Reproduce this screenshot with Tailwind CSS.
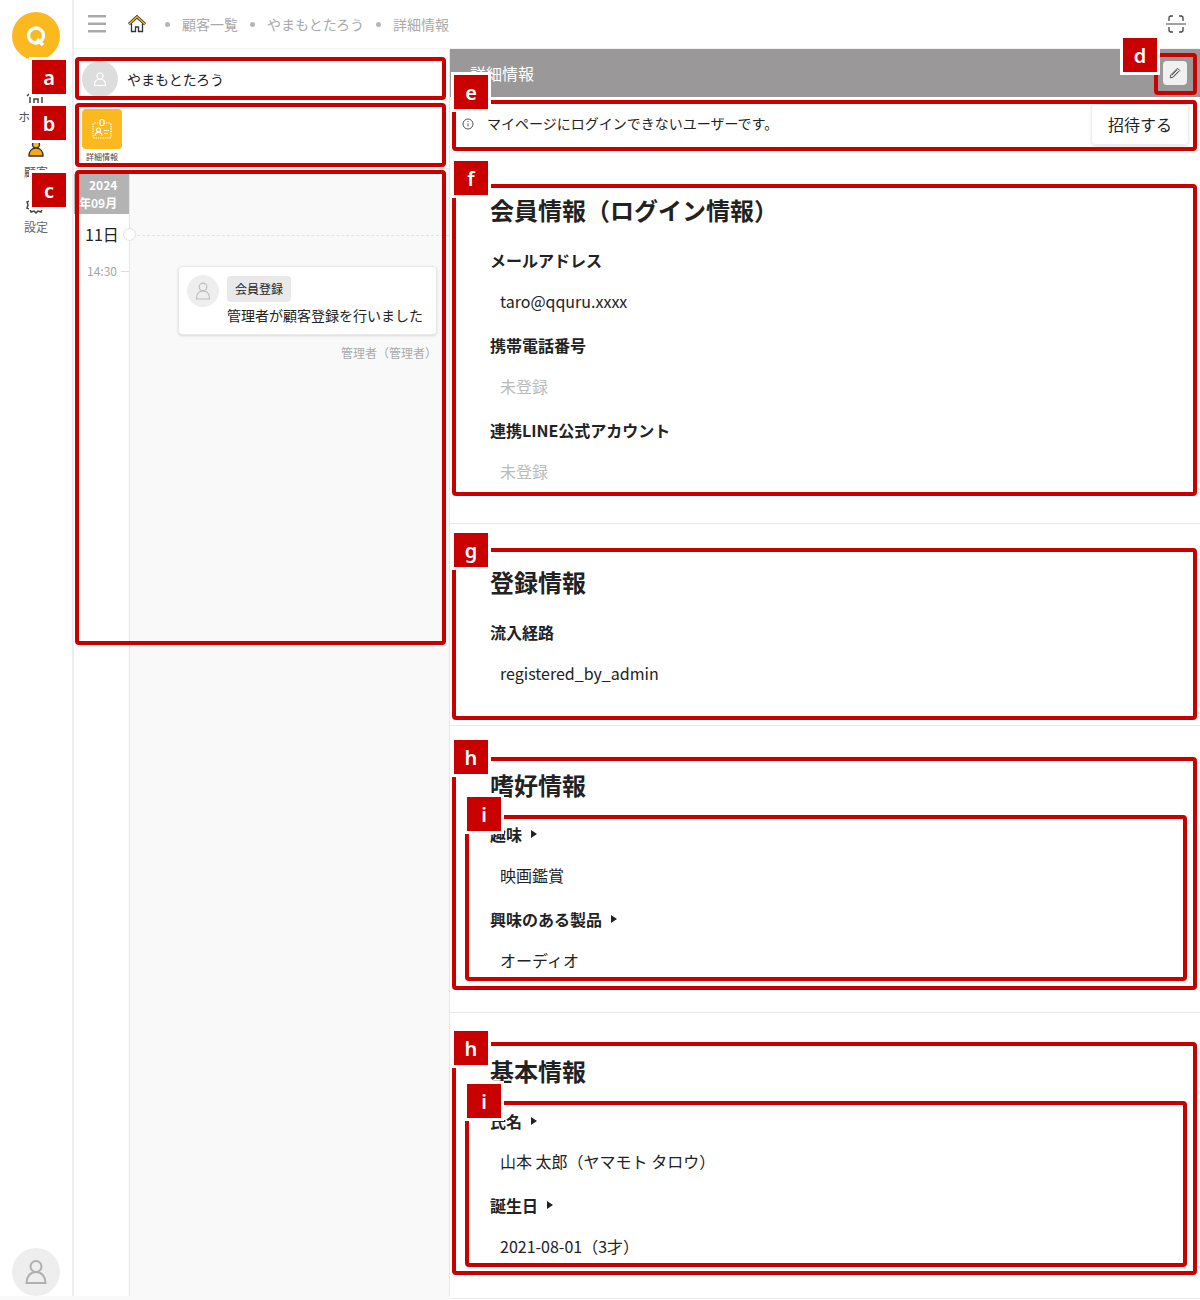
<!DOCTYPE html>
<html lang="ja">
<head>
    <meta charset="UTF-8">
    <meta name="viewport" content="width=device-width, initial-scale=1.0">
    <title>詳細情報</title>
    <script src="https://cdn.jsdelivr.net/npm/@tailwindcss/browser@4"></script>
</head>
<body class="bg-white font-['Noto_Sans_CJK_JP','Noto_Sans',sans-serif] text-[#222]">
<div class="relative w-[1200px] h-[1300px] overflow-hidden">
    <div class="flex h-[1296px]">
        <!-- sidebar -->
        <aside class="w-[74px] shrink-0 border-r-2 border-[#eeeeee] flex flex-col items-center pt-3">
            <div class="w-12 h-12 rounded-full bg-[#fbb91f] flex items-center justify-center">
                <svg class="w-6 h-6" viewBox="0 0 24 24" fill="none" stroke="white" stroke-width="3.400"><circle cx="12" cy="11.500" r="7.500"/><path d="M13 15l6 6"/></svg>
            </div>
            <div class="mt-6 flex flex-col items-center">
                <svg class="w-6 h-6" viewBox="0 0 24 24" fill="none" stroke="#444" stroke-width="1.500"><path d="M3 12l9-8 9 8"/><path d="M6 10v9q0 1 1 1h3v-5h4v5h3q1 0 1-1v-9"/></svg>
                <span class="text-xs leading-4 mt-[1px] text-[#555]">ホーム</span>
            </div>
            <div class="mt-[11px] flex flex-col items-center">
                <svg class="w-6 h-6" viewBox="0 0 24 24" fill="#f5a81c" stroke="#333" stroke-width="1.400"><circle cx="12" cy="8.500" r="3.500" fill="#fbb91f"/><path d="M5 20c0-5 3-8 7-8s7 3 7 8z"/></svg>
                <span class="text-xs leading-4 mt-[4px] text-[#555]">顧客</span>
            </div>
            <div class="mt-[13px] flex flex-col items-center">
                <svg class="w-6 h-6" viewBox="0 0 24 24" fill="none" stroke="#444" stroke-width="1.500"><circle cx="12" cy="12" r="3"/><path d="M12 3l2 3 3-1 1 3 3 1-1 3 1 3-3 1-1 3-3-1-2 2-2-2-3 1-1-3-3-1 1-3-1-3 3-1 1-3 3 1z"/></svg>
                <span class="text-xs leading-4 mt-[2px] text-[#666]">設定</span>
            </div>
            <div class="mt-auto w-12 h-12 rounded-full bg-[#eeeeee] flex items-center justify-center">
                <svg class="w-7 h-7" viewBox="0 0 28 28" fill="none" stroke="#b0b0b0" stroke-width="2"><circle cx="14" cy="8.500" r="5.500"/><path d="M4.500 25c0-6 3.500-11 9.500-11s9.500 5 9.500 11z"/></svg>
            </div>
        </aside>

        <div class="flex-1 flex flex-col min-w-0">
            <!-- top bar -->
            <header class="h-[49px] shrink-0 flex items-center pl-[14px] pr-[14px] text-sm text-[#aaaaaa] border-b border-[#f2f2f2]">
                <svg class="w-[18px] h-[18px]" viewBox="0 0 18 18" fill="#aaaaaa"><rect y="0" width="18" height="2.500"/><rect y="7.500" width="18" height="2.500"/><rect y="15" width="18" height="2.500"/></svg>
                <svg class="w-[18px] h-[18px] ml-[22px]" viewBox="0 0 18 18"><path d="M3.500 8.500V16.500h4V12h3v4.500h4V8.500" fill="white" stroke="#333" stroke-width="1.300"/><path d="M.8 9.200L9 1.800l8.200 7.400" fill="none" stroke="#333" stroke-width="3"/><path d="M.8 9.200L9 1.800l8.200 7.400" fill="none" stroke="#f5b01e" stroke-width="1.500"/></svg>
                <span class="w-[5px] h-[5px] rounded-full bg-[#b5b5b5] ml-[19px]"></span>
                <span class="ml-[12px]">顧客一覧</span>
                <span class="w-[5px] h-[5px] rounded-full bg-[#b5b5b5] ml-[12px]"></span>
                <span class="ml-[12px]">やまもとたろう</span>
                <span class="w-[5px] h-[5px] rounded-full bg-[#b5b5b5] ml-[12px]"></span>
                <span class="ml-[12px]">詳細情報</span>
                <svg class="w-[20px] h-[18px] ml-auto" viewBox="0 0 20 18" fill="none" stroke="#444" stroke-width="1.300"><path d="M3 6V3q0-2 2-2h2M13 1h2q2 0 2 2v3M3 12v3q0 2 2 2h2M13 17h2q2 0 2-2v-3"/><path d="M0 9h20" stroke-width="1"/></svg>
            </header>

            <div class="flex-1 flex min-h-0">
                <!-- left panel -->
                <div class="w-[376px] shrink-0 border-r border-[#e8e8e8] flex flex-col">
                    <div class="h-[51px] flex items-center pl-2 pt-[9px]">
                        <div class="w-9 h-9 rounded-full bg-[#dddddd] flex items-center justify-center">
                            <svg class="w-4 h-4" viewBox="0 0 16 16" fill="none" stroke="white" stroke-width="1.200"><circle cx="8" cy="5" r="3"/><path d="M2.500 14.500c0-4 2-6.500 5.500-6.500s5.500 2.500 5.500 6.500z"/></svg>
                        </div>
                        <span class="ml-[9px] text-sm">やまもとたろう</span>
                    </div>
                    <div class="h-[69px] pl-2 pt-[9px] border-b border-[#e8e8e8]">
                        <div class="w-10 flex flex-col items-center">
                            <div class="w-10 h-10 rounded bg-[#fbb91f] flex items-center justify-center">
                                <svg class="w-6 h-6" viewBox="0 0 24 24" fill="none" stroke="white" stroke-width="1.200"><rect x="3" y="6" width="18" height="15" rx="1.500" stroke-dasharray="1.500 0.800"/><rect x="10" y="2.500" width="4" height="6" rx="1.500" fill="#fbb91f"/><circle cx="8.500" cy="13" r="2"/><path d="M5 19c0-3 1.500-3.500 3.500-3.500S12 16 12 19M14 13.500h5M14 16.500h4"/></svg>
                            </div>
                            <span class="text-[8px] leading-3 mt-[2px] whitespace-nowrap text-[#444]">詳細情報</span>
                        </div>
                    </div>
                    <!-- timeline -->
                    <div class="flex-1 flex min-h-0">
                        <div class="w-[56px] shrink-0 border-r border-[#e6e6e6] flex flex-col">
                            <div class="mt-[5px] h-[40px] bg-[#b3b3b3] text-white text-xs leading-[18px] font-bold pt-[2px] whitespace-nowrap">
                                <span class="block pl-[15px]">2024</span>
                                <span class="block pl-[5px]">年09月</span>
                            </div>
                            <div class="relative h-[40px] flex items-center pl-[11px] text-base">11日
                                <span class="absolute right-[-7px] top-[14px] w-[13px] h-[13px] rounded-full bg-white border border-[#e2e2e2]"></span>
                            </div>
                            <div class="flex items-center pl-[13px] mt-[8px] text-xs leading-[18px] text-[#a5a5a5]">14:30<span class="ml-[4px] w-[8px] border-t border-[#dddddd]"></span></div>
                        </div>
                        <div class="flex-1 bg-[#f9f9f9] flex flex-col">
                            <div class="mt-[66px] ml-[7px] border-t border-dashed border-[#e2e2e2]"></div>
                            <div class="ml-[48px] mr-[12px] mt-[30px] h-[69px] bg-white border border-[#e8e8e8] rounded shadow-sm flex pl-2 pt-2">
                                <div class="w-8 h-8 rounded-full bg-[#eeeeee] flex items-center justify-center shrink-0">
                                    <svg class="w-5 h-5" viewBox="0 0 20 20" fill="none" stroke="#bbbbbb" stroke-width="1.200"><circle cx="10" cy="6" r="3.800"/><path d="M3.500 18c0-5 2.500-8 6.500-8s6.500 3 6.500 8z"/></svg>
                                </div>
                                <div class="ml-2">
                                    <span class="mt-[1px] block w-[64px] h-[26px] bg-[#e9e9e9] rounded text-xs leading-[26px] text-center">会員登録</span>
                                    <p class="text-sm leading-5 mt-[3px] whitespace-nowrap">管理者が顧客登録を行いました</p>
                                </div>
                            </div>
                            <p class="mt-[9px] pr-[12px] text-right text-xs leading-[18px] text-[#aaaaaa]">管理者（管理者）</p>
                        </div>
                    </div>
                </div>

                <!-- right panel -->
                <main class="flex-1 min-w-0">
                    <div class="h-[48px] bg-[#9a9898] flex items-center pl-5 pr-[13px] text-white">
                        <span class="text-base">詳細情報</span>
                        <button class="ml-auto w-6 h-6 rounded bg-[#f0f0f0] flex items-center justify-center">
                            <svg class="w-3 h-3" viewBox="0 0 12 12" fill="none" stroke="#555" stroke-width="1"><path d="M8.500 1.200l2.300 2.300-6.800 6.800-2.800.5.500-2.800z"/><path d="M4 9.800l5.500-5.500M2.800 8.200l5.500-5.500"/></svg>
                        </button>
                    </div>
                    <div class="h-[54px] flex items-center pl-3 pr-[11px] border-b border-[#eeeeee]">
                        <svg class="w-3 h-3 shrink-0" viewBox="0 0 12 12" fill="none" stroke="#555"><circle cx="6" cy="6" r="5"/><path d="M6 5.500v3M6 3v1"/></svg>
                        <span class="ml-[13px] mb-[2px] text-sm">マイページにログインできないユーザーです。</span>
                        <button class="ml-auto mt-[1px] w-[98px] h-[41px] border border-[#eeeeee] rounded shadow-sm text-base">招待する</button>
                    </div>

                    <section class="h-[373px] pt-[41px] pl-10 border-b border-[#e8e8e8]">
                        <h2 class="text-2xl leading-9 font-bold">会員情報（ログイン情報）</h2>
                        <h3 class="mt-5 text-base leading-6 font-bold">メールアドレス</h3>
                        <p class="mt-[17px] ml-[10px] text-base leading-6">taro@qquru.xxxx</p>
                        <h3 class="mt-5 text-base leading-6 font-bold">携帯電話番号</h3>
                        <p class="mt-[17px] ml-[10px] text-base leading-6 text-[#bbbbbb]">未登録</p>
                        <h3 class="mt-5 text-base leading-6 font-bold">連携LINE公式アカウント</h3>
                        <p class="mt-[17px] ml-[10px] text-base leading-6 text-[#bbbbbb]">未登録</p>
                    </section>
                    <section class="h-[202px] pt-[40px] pl-10 border-b border-[#e8e8e8]">
                        <h2 class="text-2xl leading-9 font-bold">登録情報</h2>
                        <h3 class="mt-5 text-base leading-6 font-bold">流入経路</h3>
                        <p class="mt-[17px] ml-[10px] text-base leading-6">registered_by_admin</p>
                    </section>
                    <section class="h-[287px] pt-[41px] pl-10 border-b border-[#e8e8e8]">
                        <h2 class="text-2xl leading-9 font-bold">嗜好情報</h2>
                        <h3 class="mt-[19px] text-base leading-6 font-bold flex items-center">趣味<span class="ml-[9px] border-l-[6px] border-y-4 border-y-transparent border-l-[#222]"></span></h3>
                        <p class="mt-[17px] ml-[10px] text-base leading-6">映画鑑賞</p>
                        <h3 class="mt-5 text-base leading-6 font-bold flex items-center">興味のある製品<span class="ml-[9px] border-l-[6px] border-y-4 border-y-transparent border-l-[#222]"></span></h3>
                        <p class="mt-[17px] ml-[10px] text-base leading-6">オーディオ</p>
                    </section>
                    <section class="h-[286px] pt-[40px] pl-10 border-b border-[#e8e8e8]">
                        <h2 class="text-2xl leading-9 font-bold">基本情報</h2>
                        <h3 class="mt-5 text-base leading-6 font-bold flex items-center">氏名<span class="ml-[9px] border-l-[6px] border-y-4 border-y-transparent border-l-[#222]"></span></h3>
                        <p class="mt-4 ml-[10px] text-base leading-6">山本 太郎（ヤマモト タロウ）</p>
                        <h3 class="mt-5 text-base leading-6 font-bold flex items-center">誕生日<span class="ml-[9px] border-l-[6px] border-y-4 border-y-transparent border-l-[#222]"></span></h3>
                        <p class="mt-[17px] ml-[10px] text-base leading-6">2021-08-01（3才）</p>
                    </section>
                </main>
            </div>
        </div>
    </div>
    <div class="h-[4px] w-[450px] bg-[#f9f9f9]"></div>

    <!-- annotation frames -->
    <div class="absolute left-[75px] top-[57px] w-[371px] h-[43px] border-4 border-[#c80000] rounded"></div>
    <div class="absolute left-[75px] top-[103px] w-[371px] h-[64px] border-4 border-[#c80000] rounded"></div>
    <div class="absolute left-[75px] top-[170px] w-[371px] h-[475px] border-4 border-[#c80000] rounded"></div>
    <div class="absolute left-[1154px] top-[53px] w-[43px] h-[42px] border-4 border-[#c80000] rounded"></div>
    <div class="absolute left-[452px] top-[100px] w-[745px] h-[51px] border-4 border-[#c80000] rounded"></div>
    <div class="absolute left-[452px] top-[184px] w-[745px] h-[312px] border-4 border-[#c80000] rounded"></div>
    <div class="absolute left-[452px] top-[548px] w-[745px] h-[172px] border-4 border-[#c80000] rounded"></div>
    <div class="absolute left-[452px] top-[757px] w-[745px] h-[233px] border-4 border-[#c80000] rounded"></div>
    <div class="absolute left-[465px] top-[815px] w-[722px] h-[166px] border-4 border-[#c80000] rounded"></div>
    <div class="absolute left-[452px] top-[1042px] w-[745px] h-[233px] border-4 border-[#c80000] rounded"></div>
    <div class="absolute left-[465px] top-[1101px] w-[722px] h-[166px] border-4 border-[#c80000] rounded"></div>

    <!-- annotation labels -->
    <span class="absolute left-[32px] top-[60px] w-[34px] h-[34px] pt-[2px] bg-[#c80000] text-white text-xl font-['Noto_Sans',sans-serif] font-semibold flex items-center justify-center ring-3 ring-white">a</span>
    <span class="absolute left-[32px] top-[106px] w-[34px] h-[34px] pt-[2px] bg-[#c80000] text-white text-xl font-['Noto_Sans',sans-serif] font-semibold flex items-center justify-center ring-3 ring-white">b</span>
    <span class="absolute left-[32px] top-[173px] w-[34px] h-[34px] pt-[2px] bg-[#c80000] text-white text-xl font-['Noto_Sans',sans-serif] font-semibold flex items-center justify-center ring-3 ring-white">c</span>
    <span class="absolute left-[1123px] top-[38px] w-[34px] h-[34px] pt-[2px] bg-[#c80000] text-white text-xl font-['Noto_Sans',sans-serif] font-semibold flex items-center justify-center ring-3 ring-white">d</span>
    <span class="absolute left-[454px] top-[75px] w-[34px] h-[34px] pt-[2px] bg-[#c80000] text-white text-xl font-['Noto_Sans',sans-serif] font-semibold flex items-center justify-center ring-3 ring-white">e</span>
    <span class="absolute left-[454px] top-[161px] w-[34px] h-[34px] pt-[2px] bg-[#c80000] text-white text-xl font-['Noto_Sans',sans-serif] font-semibold flex items-center justify-center ring-3 ring-white">f</span>
    <span class="absolute left-[454px] top-[533px] w-[34px] h-[34px] pt-[2px] bg-[#c80000] text-white text-xl font-['Noto_Sans',sans-serif] font-semibold flex items-center justify-center ring-3 ring-white">g</span>
    <span class="absolute left-[454px] top-[740px] w-[34px] h-[34px] pt-[2px] bg-[#c80000] text-white text-xl font-['Noto_Sans',sans-serif] font-semibold flex items-center justify-center ring-3 ring-white">h</span>
    <span class="absolute left-[467px] top-[797px] w-[34px] h-[34px] pt-[2px] bg-[#c80000] text-white text-xl font-['Noto_Sans',sans-serif] font-semibold flex items-center justify-center ring-3 ring-white">i</span>
    <span class="absolute left-[454px] top-[1031px] w-[34px] h-[34px] pt-[2px] bg-[#c80000] text-white text-xl font-['Noto_Sans',sans-serif] font-semibold flex items-center justify-center ring-3 ring-white">h</span>
    <span class="absolute left-[467px] top-[1084px] w-[34px] h-[34px] pt-[2px] bg-[#c80000] text-white text-xl font-['Noto_Sans',sans-serif] font-semibold flex items-center justify-center ring-3 ring-white">i</span>
</div>
</body>
</html>
